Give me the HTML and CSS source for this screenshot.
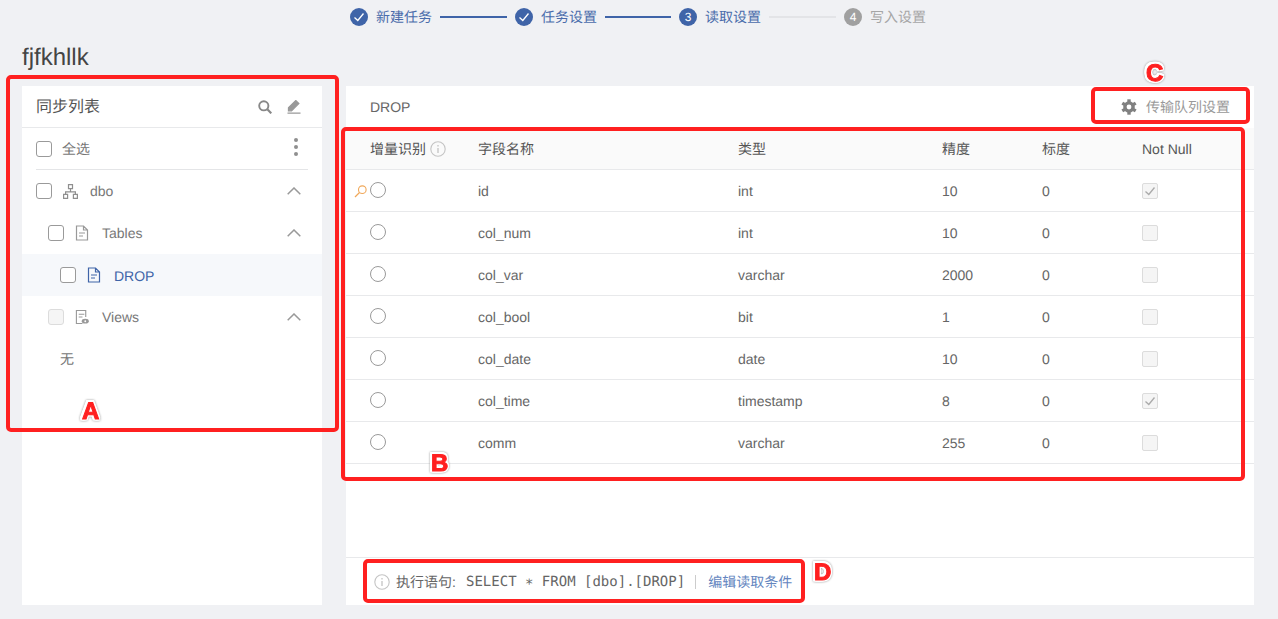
FILE: index.html
```html
<!DOCTYPE html>
<html lang="zh">
<head>
<meta charset="utf-8">
<title>读取设置</title>
<link rel="stylesheet" href="styles.css">
</head>
<body>
<svg class="defs" width="0" height="0" aria-hidden="true">
  <symbol id="doc" viewBox="0 0 14 16"><path d="M1.500 1h7l4 4v10h-11zM8.500 1v4h4M4 8h6M4 11h4" fill="none" stroke="currentColor" stroke-width="1.200"/></symbol>
  <symbol id="chev" viewBox="0 0 14 8"><path d="M.7 7.300 7 1l6.300 6.300" fill="none" stroke="currentColor" stroke-width="1.500"/></symbol>
  <symbol id="info" viewBox="0 0 16 16"><circle cx="8" cy="8" r="7.200" fill="none" stroke="currentColor" stroke-width="1.100"/><path d="M8 7v5M8 4v1.500" stroke="currentColor" stroke-width="1.300"/></symbol>
  <symbol id="tick" viewBox="0 0 12 12"><path d="M1.500 6.500 4.800 9.500 10.500 2.500" fill="none" stroke="currentColor" stroke-width="1.300"/></symbol>
</svg>

<nav class="steps">
  <div class="step done"><span class="dot"><svg class="dot-tick"><use href="#tick"/></svg></span><span>新建任务</span></div>
  <i class="link on"></i>
  <div class="step done"><span class="dot"><svg class="dot-tick"><use href="#tick"/></svg></span><span>任务设置</span></div>
  <i class="link on short"></i>
  <div class="step done"><span class="dot">3</span><span>读取设置</span></div>
  <i class="link"></i>
  <div class="step todo"><span class="dot">4</span><span>写入设置</span></div>
</nav>

<h1 class="title">fjfkhllk</h1>

<main class="content">
  <aside class="side">
    <header class="side-head">
      <span class="side-title">同步列表</span>
      <svg class="ic-search" viewBox="0 0 14 14"><circle cx="5.800" cy="5.800" r="4.600" fill="none" stroke="currentColor" stroke-width="1.900"/><path d="m9.300 9.300 4 4" stroke="currentColor" stroke-width="2.200"/></svg>
      <svg class="ic-edit" viewBox="0 0 14 14"><path d="M1.500 7.800 8.800.6l3 3-7.300 7.200H1.500zM.5 13.100h13" fill="currentColor" stroke="currentColor" stroke-width="1.300"/></svg>
    </header>
    <div class="all-row">
      <span class="cb"></span><span class="all-label">全选</span>
      <span class="more"><b></b><b></b><b></b></span>
    </div>
    <div class="tree-row lv0">
      <span class="cb"></span>
      <svg class="ic-tree" viewBox="0 0 15 15"><path d="M5.500 .6h4v4h-4zM.6 10.400h4v4h-4zM10.400 10.400h4v4h-4zM7.500 4.600v3.200M2.600 10.400V7.800h9.800v2.600" fill="none" stroke="currentColor" stroke-width="1.200"/></svg>
      <span class="label">dbo</span>
      <svg class="chev"><use href="#chev"/></svg>
    </div>
    <div class="tree-row lv1">
      <span class="cb"></span>
      <svg class="ic-doc"><use href="#doc"/></svg>
      <span class="label">Tables</span>
      <svg class="chev"><use href="#chev"/></svg>
    </div>
    <div class="tree-row lv2 active">
      <span class="cb"></span>
      <svg class="ic-doc"><use href="#doc"/></svg>
      <span class="label">DROP</span>
    </div>
    <div class="tree-row lv1">
      <span class="cb off"></span>
      <svg class="ic-doc" viewBox="0 0 15 16"><path d="M8 15H1.500V1h10v7M4 5h6M4 8h4" fill="none" stroke="currentColor" stroke-width="1.200"/><ellipse cx="11" cy="12.500" rx="3.800" ry="2.500" fill="currentColor"/><circle cx="11" cy="12.500" r="1" fill="#fff"/></svg>
      <span class="label">Views</span>
      <svg class="chev"><use href="#chev"/></svg>
    </div>
    <div class="none">无</div>
  </aside>

  <section class="detail">
    <header class="detail-head">
      <span class="detail-name">DROP</span>
      <span class="queue">
        <svg class="ic-gear" viewBox="0 0 16 16"><g stroke="currentColor" stroke-width="3.400"><path d="M8 .3v15.400"/><path d="M1.300 4.100l13.400 7.800"/><path d="M1.300 11.900l13.400-7.800"/></g><circle cx="8" cy="8" r="5.800" fill="currentColor"/><circle cx="8" cy="8" r="2.400" fill="#fff"/></svg>
        传输队列设置
      </span>
    </header>

    <div class="grid">
      <div class="row thead">
        <span class="c1">增量识别<svg class="ic-info"><use href="#info"/></svg></span>
        <span>字段名称</span><span>类型</span><span>精度</span><span>标度</span><span>Not Null</span>
      </div>
      <div class="row">
        <span class="c1"><svg class="ic-key" viewBox="0 0 13 13"><circle cx="8.300" cy="4.700" r="3.800" fill="none" stroke="currentColor" stroke-width="1.100"/><path d="M5.500 7.500 1 12" stroke="currentColor" stroke-width="1.300"/></svg><i class="radio"></i></span>
        <span>id</span><span>int</span><span>10</span><span>0</span><span><i class="nn"><svg class="nn-tick"><use href="#tick"/></svg></i></span>
      </div>
      <div class="row"><span class="c1"><i class="radio"></i></span><span>col_num</span><span>int</span><span>10</span><span>0</span><span><i class="nn"></i></span></div>
      <div class="row"><span class="c1"><i class="radio"></i></span><span>col_var</span><span>varchar</span><span>2000</span><span>0</span><span><i class="nn"></i></span></div>
      <div class="row"><span class="c1"><i class="radio"></i></span><span>col_bool</span><span>bit</span><span>1</span><span>0</span><span><i class="nn"></i></span></div>
      <div class="row"><span class="c1"><i class="radio"></i></span><span>col_date</span><span>date</span><span>10</span><span>0</span><span><i class="nn"></i></span></div>
      <div class="row"><span class="c1"><i class="radio"></i></span><span>col_time</span><span>timestamp</span><span>8</span><span>0</span><span><i class="nn"><svg class="nn-tick"><use href="#tick"/></svg></i></span></div>
      <div class="row"><span class="c1"><i class="radio"></i></span><span>comm</span><span>varchar</span><span>255</span><span>0</span><span><i class="nn"></i></span></div>
    </div>

    <footer class="sql">
      <svg class="ic-info"><use href="#info"/></svg>
      <span class="sql-label">执行语句:</span>
      <code class="sql-code">SELECT ∗ FROM [dbo].[DROP]</code>
      <i class="sep"></i>
      <a class="edit">编辑读取条件</a>
    </footer>
  </section>
</main>

<div class="mark box-a"></div>
<div class="mark box-b"></div>
<div class="mark box-c"></div>
<div class="mark box-d"></div>
<span class="tag tag-a">A</span>
<span class="tag tag-b">B</span>
<span class="tag tag-c">C</span>
<span class="tag tag-d">D</span>
</body>
</html>
```
FILE: styles.css
```css
* { box-sizing: border-box; }
html, body { margin: 0; height: 619px; overflow: hidden; }
body {
  position: relative;
  background: #f0f1f4;
  color: #666;
  font: 14px/20px "Liberation Sans", "Noto Sans CJK SC", sans-serif;
  text-rendering: geometricPrecision;
}
.defs { position: absolute; }
svg { display: block; flex: none; }

.steps { height: 34px; padding-left: 350px; display: flex; align-items: center; }
.step { display: flex; align-items: center; gap: 8px; color: #4a6cab; }
.step.todo { color: #a6a6a6; }
.dot {
  width: 18px; height: 18px; border-radius: 50%;
  background: #3f64a8; color: #fff;
  display: flex; align-items: center; justify-content: center;
  font-size: 12px; line-height: 18px;
}
.todo .dot { background: #a0a0a0; }
.dot-tick { width: 12px; height: 12px; }
.link { width: 67px; height: 2px; margin: 0 8px; background: #e3e4e7; }
.link.on { background: #3f64a8; }
.link.short { width: 66px; }

.title { margin: 0; padding-left: 22px; height: 52px; font-size: 24px; font-weight: 400; line-height: 47px; color: #444; }

.content { display: flex; gap: 24px; padding: 0 24px 0 22px; height: 519px; }

.side { width: 300px; background: #fff; }
.side-head { height: 42px; padding: 3px 21px 0 14px; display: flex; align-items: center; border-bottom: 1px solid #e8e9eb; }
.side-title { flex: 1; font-size: 16px; color: #555; }
.ic-search { width: 14px; height: 14px; color: #888; margin-right: 15px; margin-top: -2px; }
.ic-edit { width: 14px; height: 14px; color: #999; margin-top: -2px; }

.all-row { height: 42px; margin: 0 14px; padding-top: 1px; display: flex; align-items: center; border-bottom: 1px solid #e4e5e7; }
.all-label { flex: 1; margin-left: 10px; color: #777; }
.more { display: flex; flex-direction: column; gap: 3px; margin-right: 10px; margin-top: -5px; }
.more b { width: 4px; height: 4px; border-radius: 50%; background: #8f8f8f; }

.cb { width: 16px; height: 16px; flex: none; border: 1px solid #9a9a9a; border-radius: 3px; background: #fff; }
.cb.off { background: #f5f5f5; border-color: #dcdcdc; }

.tree-row { height: 42px; display: flex; align-items: center; padding-right: 21px; color: #777; }
.lv0 { padding-left: 14px; }
.lv1 { padding-left: 26px; }
.lv2 { padding-left: 38px; }
.tree-row .label { flex: 1; }
.ic-tree { width: 15px; height: 15px; margin: 0 12px 0 11px; color: #8f8f8f; }
.ic-doc { width: 14px; height: 16px; margin: 0 13px 0 11px; color: #999; }
.active { background: #f6f8fb; color: #3f64a8; }
.active .label { padding-top: 2px; }
.active .ic-doc { color: #3f64a8; }
.chev { width: 14px; height: 8px; color: #999; }
.none { padding: 11px 0 0 38px; color: #777; }

.detail { flex: 1; background: #fff; display: flex; flex-direction: column; }
.detail-head { height: 42px; padding: 0 24px; display: flex; align-items: center; justify-content: space-between; }
.detail-name { color: #666; }
.queue { display: flex; align-items: center; gap: 9px; color: #999; }
.ic-gear { width: 16px; height: 16px; color: #808080; }

.grid { flex: 1; }
.row {
  height: 42px; padding-left: 24px;
  display: grid; grid-template-columns: 108px 260px 204px 100px 100px 1fr;
  align-items: center;
  border-bottom: 1px solid #e8e9eb;
}
.thead { background: #fafafa; color: #555; }
.c1 { position: relative; display: flex; align-items: center; gap: 4px; }
.ic-info { width: 16px; height: 16px; color: #c4c4c4; }
.radio { width: 16px; height: 16px; margin-top: -2px; border: 1px solid #9a9a9a; border-radius: 50%; }
.ic-key { position: absolute; left: -16px; top: 1px; width: 13px; height: 13px; color: #f0a85a; }
.nn { width: 16px; height: 16px; display: flex; align-items: center; justify-content: center; border: 1px solid #dcdcdc; border-radius: 2px; background: #f5f5f5; }
.nn-tick { width: 12px; height: 12px; color: #aaa; }

.sql { height: 48px; padding: 1px 0 0 28px; display: flex; align-items: center; border-top: 1px solid #e8e9eb; color: #666; }
.sql-label { margin-left: 6px; width: 70px; }
.sql-code { font: 14px/20px "DejaVu Sans Mono", monospace; color: #666; }
.sep { width: 1px; height: 14px; margin: 0 12px 0 10px; background: #ccc; }
.edit { color: #6486c0; }

.mark { position: absolute; border: 4px solid #ff2020; border-radius: 5px; }
.box-a { left: 6px; top: 75px; width: 333px; height: 357px; }
.box-b { left: 341px; top: 127px; width: 904px; height: 354px; }
.box-c { left: 1091px; top: 87px; width: 159px; height: 37px; }
.box-d { left: 363px; top: 559px; width: 442px; height: 44px; }

.tag {
  position: absolute; font-size: 24px; font-weight: 700; line-height: 24px; color: #ff2020;
  -webkit-text-stroke: 1px #ff2020;
  filter: drop-shadow(1.5px 0 0 #fff) drop-shadow(-1.5px 0 0 #fff) drop-shadow(0 1.5px 0 #fff) drop-shadow(0 -1.5px 0 #fff) drop-shadow(0 0 1px #999);
}
.tag-a { left: 82px; top: 400px; }
.tag-b { left: 431px; top: 452px; }
.tag-c { left: 1146px; top: 62px; }
.tag-d { left: 814px; top: 561px; }
```
